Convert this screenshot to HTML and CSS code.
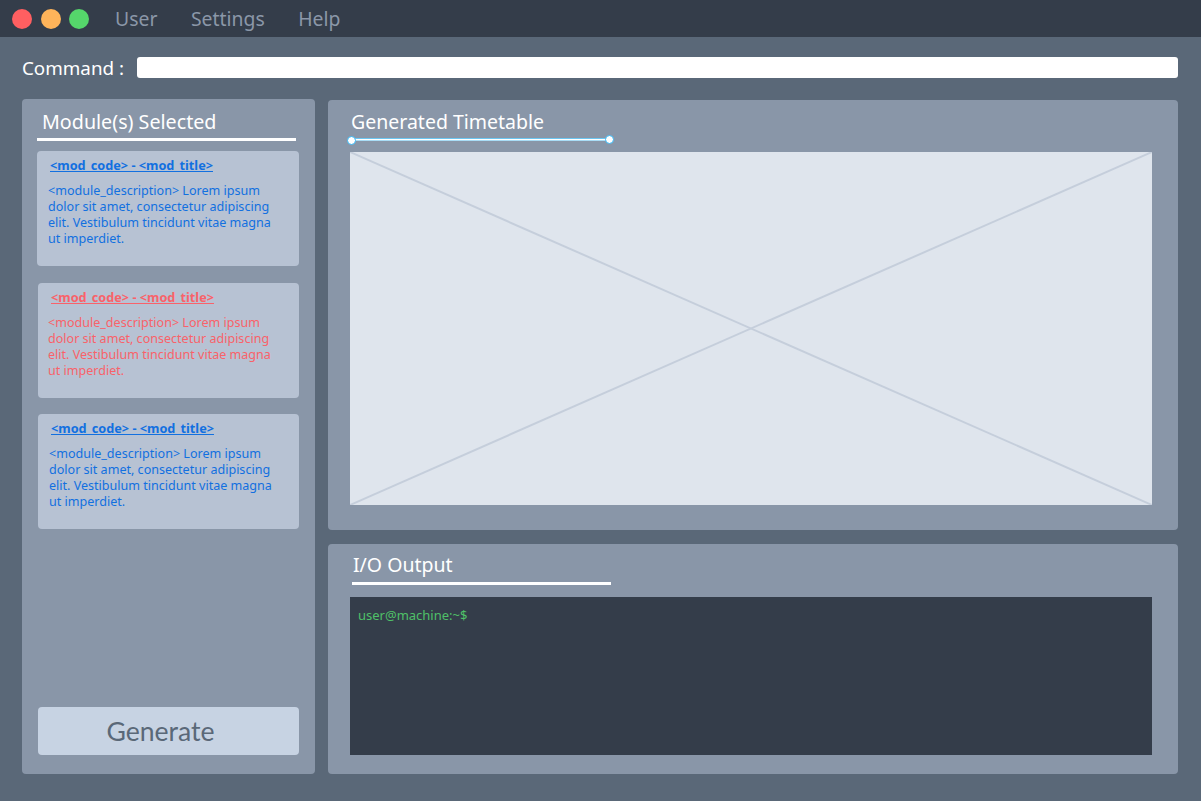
FILE: index.html
```html
<!doctype html>
<html>
<head>
	<meta charset="utf-8">
	<title>Timetable Generator</title>
	<link rel="stylesheet" href="styles.css">
</head>
<body>
	<div id="titlebar">
		<div class="dot red"></div>
		<div class="dot yellow"></div>
		<div class="dot green"></div>
		<div class="menu">
			<span>User</span>
			<span>Settings</span>
			<span>Help</span>
		</div>
	</div>
	<div id="content">
		<div id="command">
			<label>Command :</label>
			<div class="input"></div>
		</div>
		<div id="columns">
			<div id="sidebar" class="panel">
				<h2 class="heading">Module(s) Selected</h2>
				<div class="rule"></div>
				<div class="card first">
					<div class="card-title">&lt;mod_code&gt; - &lt;mod_title&gt;</div>
					<p>&lt;module_description&gt; Lorem ipsum dolor sit amet, consectetur adipiscing elit. Vestibulum tincidunt vitae magna ut imperdiet.</p>
				</div>
				<div class="card clash">
					<div class="card-title">&lt;mod_code&gt; - &lt;mod_title&gt;</div>
					<p>&lt;module_description&gt; Lorem ipsum dolor sit amet, consectetur adipiscing elit. Vestibulum tincidunt vitae magna ut imperdiet.</p>
				</div>
				<div class="card">
					<div class="card-title">&lt;mod_code&gt; - &lt;mod_title&gt;</div>
					<p>&lt;module_description&gt; Lorem ipsum dolor sit amet, consectetur adipiscing elit. Vestibulum tincidunt vitae magna ut imperdiet.</p>
				</div>
				<button id="generate">Generate</button>
			</div>
			<div id="main">
				<div id="timetable" class="panel">
					<h2 class="heading">Generated Timetable</h2>
					<div class="rule selected">
						<i class="handle left"></i>
						<i class="handle right"></i>
					</div>
					<div class="placeholder">
						<svg viewBox="0 0 802 353" preserveAspectRatio="none">
							<line x1="0" y1="0" x2="802" y2="353"></line>
							<line x1="802" y1="0" x2="0" y2="353"></line>
						</svg>
					</div>
				</div>
				<div id="output" class="panel">
					<h2 class="heading">I/O Output</h2>
					<div class="rule"></div>
					<div class="terminal">user@machine:~$</div>
				</div>
			</div>
		</div>
	</div>
</body>
</html>
```

FILE: styles.css
```css
* {
	box-sizing: border-box;
}
html, body {
	margin: 0;
	height: 100%;
}
body {
	display: flex;
	flex-direction: column;
	background: #5a6878;
	font-family: "Noto Sans", "Open Sans", sans-serif;
	overflow: hidden;
}

#titlebar {
	display: flex;
	align-items: center;
	height: 37px;
	padding-left: 12px;
	background: #343d4a;
	flex: none;
}
.dot {
	width: 20px;
	height: 20px;
	border-radius: 50%;
}
.dot.red {
	background: #ff5f61;
	margin-right: 9px;
}
.dot.yellow {
	background: #ffb45a;
	margin-right: 8px;
}
.dot.green {
	background: #55d66b;
}
.menu {
	display: flex;
	gap: 33.5px;
	margin-left: 26px;
	font-size: 19.4px;
	color: #8b97a8;
}

#content {
	flex: 1;
	display: flex;
	flex-direction: column;
	padding: 20px 23px 27px 22px;
}
#command {
	display: flex;
	align-items: center;
	height: 21px;
	margin-bottom: 21px;
	color: #fff;
	font-size: 18.8px;
}
#command label {
	width: 115px;
	white-space: nowrap;
}
.input {
	flex: 1;
	height: 21px;
	background: #fff;
	border-radius: 3px;
}

#columns {
	flex: 1;
	display: flex;
	gap: 13px;
}
.panel {
	background: #8996a8;
	border-radius: 4px;
}
.heading {
	margin: 0;
	font-weight: 400;
	font-size: 19.5px;
	line-height: 26px;
	color: #fff;
}
.rule {
	height: 3px;
	background: #fff;
	width: 259px;
}

#sidebar {
	width: 293px;
	display: flex;
	flex-direction: column;
	padding: 10px 16px 19px 16px;
}
#sidebar .heading {
	margin-left: 4px;
	font-size: 19.7px;
}
#sidebar .rule {
	margin: 3px 0 10px -1px;
}
.card {
	height: 115px;
	margin-bottom: 16px;
	padding: 6px 20px 0 11px;
	background: #b7c2d3;
	border-radius: 4px;
	color: #1270e0;
	font-size: 12.55px;
	line-height: 16px;
}
.card.first {
	margin-left: -1px;
	margin-bottom: 17px;
}
.card.clash {
	padding-left: 10px;
	color: #f9626a;
}
.card-title {
	margin: 0 0 10px 2px;
	font-size: 12.7px;
	font-weight: 700;
	text-decoration: underline;
	text-decoration-skip-ink: none;
}
.card.clash .card-title {
	margin-left: 3px;
}
.card p {
	margin: 0;
}
#generate {
	margin-top: auto;
	height: 48px;
	border: 0;
	border-radius: 4px;
	background: #c7d3e3;
	color: #5a6878;
	font-family: Lato, sans-serif;
	font-size: 26.6px;
	padding: 0 16px 1px 0;
}

#main {
	flex: 1;
	display: flex;
	flex-direction: column;
	gap: 14px;
	padding-top: 1px;
}
#timetable {
	height: 430px;
	padding: 9px 26px 0 22px;
}
#timetable .heading {
	margin-left: 1px;
}
.rule.selected {
	position: relative;
	margin: 3px 0 11px 1px;
	background: #fff;
	border-top: 1px solid #6cc6f2;
	border-bottom: 1px solid #a9dcf5;
}
.handle {
	position: absolute;
	width: 9px;
	height: 9px;
	border-radius: 50%;
	background: #fff;
	border: 1.5px solid #36b3f0;
}
.handle.left {
	top: -3px;
	left: -4px;
}
.handle.right {
	top: -4px;
	right: -4px;
}
.placeholder {
	height: 353px;
	background: #dfe5ed;
}
.placeholder svg {
	display: block;
	width: 100%;
	height: 100%;
}
.placeholder line {
	stroke: #c5cedb;
	stroke-width: 2;
}

#output {
	flex: 1;
	padding: 8px 26px 19px 22px;
	display: flex;
	flex-direction: column;
}
#output .heading {
	margin-left: 3px;
}
#output .rule {
	margin: 4px 0 12px 2px;
}
.terminal {
	flex: 1;
	padding: 9px 8px;
	background: #343d4a;
	color: #4fc068;
	font-size: 13px;
	line-height: 18px;
}
```
